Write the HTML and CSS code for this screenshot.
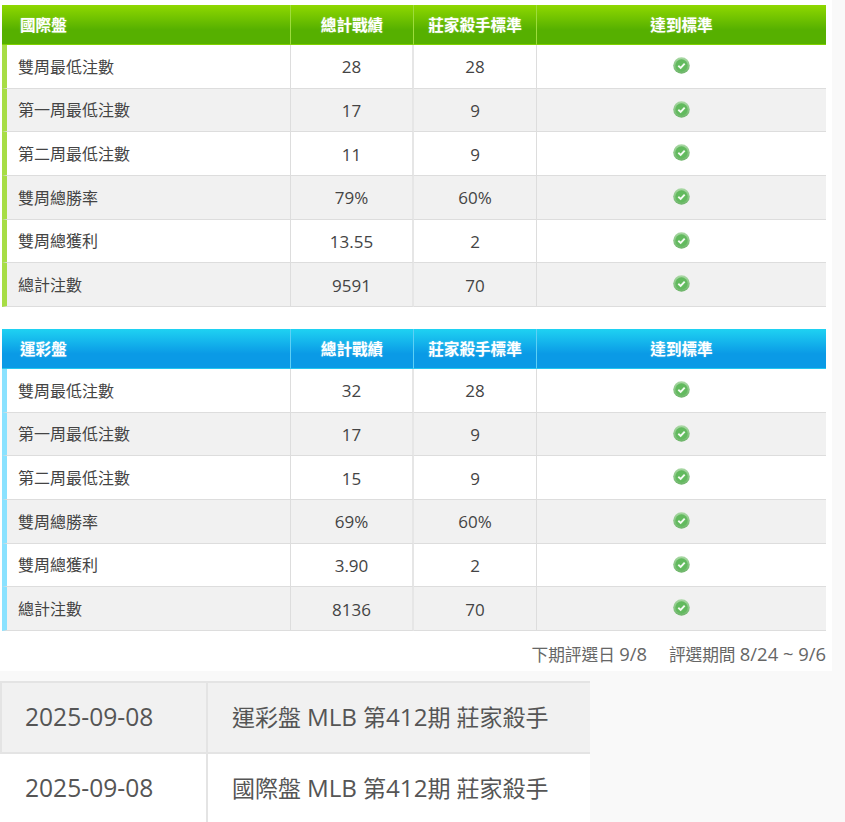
FILE: index.html
```html
<!DOCTYPE html>
<html lang="zh-Hant">
<head>
<meta charset="utf-8">
<title>莊家殺手</title>
<link rel="stylesheet" href="styles.css">
</head>
<body>
<svg class="defs" width="0" height="0" aria-hidden="true">
  <defs>
    <linearGradient id="ok" x1="0" y1="0" x2="0" y2="1">
      <stop offset="0" stop-color="#a9d8a4"/>
      <stop offset="1" stop-color="#6db569"/>
    </linearGradient>
    <symbol id="check" viewBox="0 0 16 16">
      <circle cx="8" cy="8" r="7.8" fill="url(#ok)"/>
      <circle cx="8" cy="8" r="5.8" fill="#62ba5e"/>
      <path d="M5 8.2 7.2 10.2 11 6.2" fill="none" stroke="#f4fbf3" stroke-width="1.8"/>
    </symbol>
  </defs>
</svg>
<main class="panel">
  <table class="stats green">
    <colgroup><col class="c1"><col class="c2"><col class="c3"><col class="c4"></colgroup>
    <thead><tr><th class="name">國際盤</th><th>總計戰績</th><th>莊家殺手標準</th><th>達到標準</th></tr></thead>
    <tbody>
      <tr><td class="name">雙周最低注數</td><td>28</td><td>28</td><td class="mark"><svg class="icon"><use href="#check"/></svg></td></tr>
      <tr><td class="name">第一周最低注數</td><td>17</td><td>9</td><td class="mark"><svg class="icon"><use href="#check"/></svg></td></tr>
      <tr><td class="name">第二周最低注數</td><td>11</td><td>9</td><td class="mark"><svg class="icon"><use href="#check"/></svg></td></tr>
      <tr><td class="name">雙周總勝率</td><td>79%</td><td>60%</td><td class="mark"><svg class="icon"><use href="#check"/></svg></td></tr>
      <tr><td class="name">雙周總獲利</td><td>13.55</td><td>2</td><td class="mark"><svg class="icon"><use href="#check"/></svg></td></tr>
      <tr><td class="name">總計注數</td><td>9591</td><td>70</td><td class="mark"><svg class="icon"><use href="#check"/></svg></td></tr>
    </tbody>
  </table>
  <table class="stats blue">
    <colgroup><col class="c1"><col class="c2"><col class="c3"><col class="c4"></colgroup>
    <thead><tr><th class="name">運彩盤</th><th>總計戰績</th><th>莊家殺手標準</th><th>達到標準</th></tr></thead>
    <tbody>
      <tr><td class="name">雙周最低注數</td><td>32</td><td>28</td><td class="mark"><svg class="icon"><use href="#check"/></svg></td></tr>
      <tr><td class="name">第一周最低注數</td><td>17</td><td>9</td><td class="mark"><svg class="icon"><use href="#check"/></svg></td></tr>
      <tr><td class="name">第二周最低注數</td><td>15</td><td>9</td><td class="mark"><svg class="icon"><use href="#check"/></svg></td></tr>
      <tr><td class="name">雙周總勝率</td><td>69%</td><td>60%</td><td class="mark"><svg class="icon"><use href="#check"/></svg></td></tr>
      <tr><td class="name">雙周總獲利</td><td>3.90</td><td>2</td><td class="mark"><svg class="icon"><use href="#check"/></svg></td></tr>
      <tr><td class="name">總計注數</td><td>8136</td><td>70</td><td class="mark"><svg class="icon"><use href="#check"/></svg></td></tr>
    </tbody>
  </table>
  <p class="note"><span>下期評選日 <span class="num">9/8</span></span><span>評選期間 <span class="num">8/24 ~ 9/6</span></span></p>
</main>
<table class="history">
  <colgroup><col class="h1"><col class="h2"></colgroup>
  <tbody>
    <tr><td class="date">2025-09-08</td><td>運彩盤 <span class="num">MLB</span> 第<span class="num">412</span>期 莊家殺手</td></tr>
    <tr><td class="date">2025-09-08</td><td>國際盤 <span class="num">MLB</span> 第<span class="num">412</span>期 莊家殺手</td></tr>
  </tbody>
</table>
</body>
</html>
```
FILE: styles.css
```css
* { box-sizing: border-box; }
html, body { margin: 0; height: 100%; }
body {
  background: #f9f9f9;
  color: #444;
  font-family: "Open Sans", "Noto Sans CJK TC", sans-serif;
  overflow: hidden;
}
.defs { display: block; height: 0; }
.panel {
  width: 832px;
  height: 671px;
  background: #fff;
  padding: 5px 6px 0 2px;
}
table { border-collapse: separate; border-spacing: 0; table-layout: fixed; }
.stats { width: 824px; font-size: 17px; margin-bottom: 22px; }
.c1 { width: 289px; }
.c2 { width: 123px; }
.c3 { width: 123px; }
.c4 { width: 289px; }
.stats th {
  height: 40px;
  padding: 0;
  color: #fff;
  font-size: 15.6px;
  font-weight: 700;
  text-align: center;
  text-shadow: 0 0 2px rgba(255, 255, 255, .35);
}
.stats th:last-child { border-right: 0; }
.stats th.name { text-align: left; padding-left: 18px; }
.green thead tr { background: linear-gradient(#8fd800 0, #56b000 62%, #56b000 100%); }
.blue thead tr { background: linear-gradient(#1fd2f2 0, #0a9ae6 62%, #0a9ae6 100%); }
.green th { border-bottom: 1px solid #7fd000; border-right: 1px solid #9edc3c; }
.blue th { border-bottom: 1px solid #22c6f0; border-right: 1px solid #5ed0f5; }
.stats td {
  height: 43.67px;
  padding: 1px 0 0;
  text-align: center;
  border-right: 1px solid #ddd;
  border-bottom: 1px solid #ddd;
  line-height: 1;
}
.stats td:nth-child(2) { border-right: 2px solid #e6e6e6; }
.stats td:last-child { border-right: 0; }
.stats td.name { text-align: left; padding: 1px 0 0 11px; font-size: 16px; }
.green td.name { border-left: 5px solid #a7dd45; }
.blue td.name { border-left: 5px solid #8ae2ff; }
.stats tbody tr:nth-child(even) { background: #f1f1f1; }
.stats td.mark { vertical-align: top; padding: 12px 1px 0 0; }
.icon { display: block; width: 17px; height: 17px; margin: 0 auto; }
.note {
  margin: 0;
  width: 824px;
  display: flex;
  justify-content: flex-end;
  gap: 22px;
  font-size: 16.67px;
  line-height: 22px;
  color: #666;
  position: relative;
  top: -10px;
}
.note .num { font-size: 18.4px; }
.history {
  width: 590px;
  margin-top: 10px;
  font-size: 23px;
  color: #555;
}
.history .num { font-size: 24.2px; }
.h1 { width: 208px; }
.h2 { width: 382px; }
.history td {
  height: 69px;
  padding: 0 0 0 24px;
  background: #fff;
  white-space: nowrap;
  line-height: 1;
}
.history td.date { font-size: 24.6px; padding-left: 25px; border-right: 2px solid #e4e4e4; }
.history tr:first-child td { background: #f1f1f1; border-top: 2px solid #e4e4e4; border-bottom: 2px solid #e4e4e4; height: 73px; }
.history tr:first-child td.date { border-left: 2px solid #e4e4e4; padding-left: 23px; }
```
